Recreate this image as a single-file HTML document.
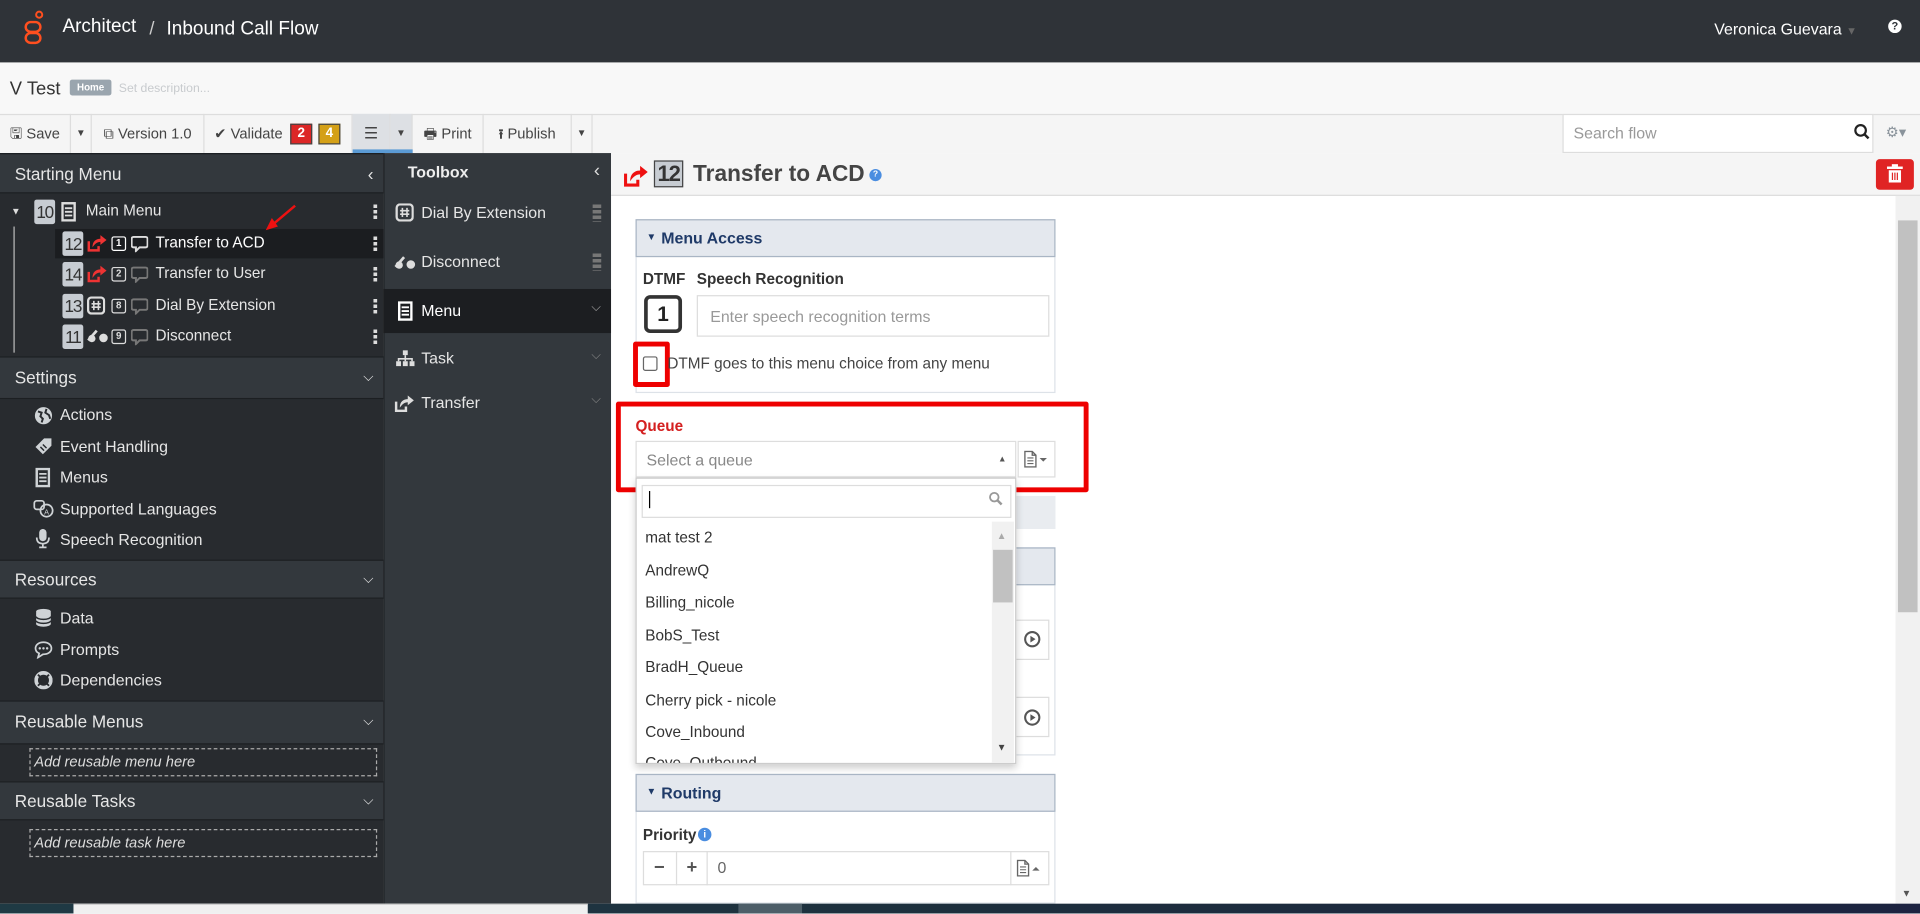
<!DOCTYPE html>
<html><head><meta charset="utf-8"><style>
html,body{margin:0;padding:0;width:1920px;height:914px;overflow:hidden;background:#fff}
#w{position:absolute;left:0;top:0;width:1568px;height:746px;transform:scale(1.22449);transform-origin:0 0;font-family:"Liberation Sans",sans-serif;font-size:13px;color:#333;overflow:hidden}
.a{position:absolute}
.hd{position:absolute;left:0;width:313px;background:#33383d;color:#e6e6e6;font-size:14px;border-top:1px solid #1c1f22;border-bottom:1px solid #1c1f22;box-sizing:border-box}
.hd span{position:absolute;left:12px}
.hd i{position:absolute;right:8px;font-style:normal;font-size:11px}
.it{position:absolute;left:49px;color:#e6e6e6;font-size:13px}
.tb{position:absolute;top:93px;height:32px;line-height:32px;font-size:12px;color:#444;border-right:1px solid #ddd;box-sizing:border-box;text-align:center}
.num{position:absolute;width:17px;height:20px;background:#c7ccd2;color:#333;font-size:14px;line-height:20px;text-align:center;border-radius:2px;letter-spacing:-1px}
.tx{position:absolute;left:127px;color:#e6e6e6;font-size:12.5px}
.dots{position:absolute;left:305px;width:3px;height:12px;background:repeating-linear-gradient(#ddd 0 3px,transparent 3px 4.5px)}
.tool{position:absolute;left:313px;width:186px;color:#e6e6e6;font-size:13px}
.q{position:absolute;left:527px;font-size:12.5px;color:#333}
.sq{position:absolute;left:91px;width:12px;height:12px;border:1.5px solid #ddd;box-sizing:border-box;border-radius:2px;color:#ddd;font-size:8px;text-align:center;line-height:9px;font-weight:bold}
</style></head><body><div id="w">
<svg width="0" height="0" style="position:absolute"><defs>
<symbol id="tr" viewBox="0 0 16 16"><path d="M1.5 7 V14.5 H9.5 V11" fill="none" stroke="currentColor" stroke-width="2"/><path d="M4.5 12 C4.5 7 7.5 5 11 5 V2 L16 6 L11 10 V7.5 C8.5 7.5 6.5 9 4.5 12Z" fill="currentColor"/></symbol>
<symbol id="bub" viewBox="0 0 14 14"><path d="M2 1.5 H12 a1.5 1.5 0 0 1 1.5 1.5 V8.5 a1.5 1.5 0 0 1 -1.5 1.5 H7 L4 13 V10 H2 a1.5 1.5 0 0 1 -1.5 -1.5 V3 a1.5 1.5 0 0 1 1.5 -1.5Z" fill="none" stroke="currentColor" stroke-width="1.6"/></symbol>
<symbol id="disc" viewBox="0 0 18 12"><path d="M1 10 L8 2" stroke="currentColor" stroke-width="2.2" fill="none"/><circle cx="4" cy="8.5" r="3" fill="currentColor"/><circle cx="13.5" cy="8" r="3.5" fill="currentColor"/></symbol>
<symbol id="doc" viewBox="0 0 12 16"><rect x="1" y="1" width="10" height="14" fill="none" stroke="currentColor" stroke-width="2"/><path d="M3 5H9M3 8H9M3 11H9" stroke="currentColor" stroke-width="1.5"/></symbol>
<symbol id="hash" viewBox="0 0 16 16"><rect x="1" y="1" width="14" height="14" rx="3" fill="none" stroke="currentColor" stroke-width="2"/><path d="M6 4V12M10 4V12M4 6.5H12M4 9.5H12" stroke="currentColor" stroke-width="1.4"/></symbol>
</defs></svg>
<!-- header -->
<div class="a" style="left:0;top:0;width:1568px;height:51px;background:#2f3338"></div>
<svg class="a" style="left:18px;top:8px" width="20" height="32" viewBox="0 0 20 32"><circle cx="14" cy="4" r="2.5" fill="none" stroke="#ff4f1f" stroke-width="1.6"/><rect x="3" y="10" width="12" height="8" rx="4" fill="none" stroke="#ff4f1f" stroke-width="2"/><rect x="3" y="19" width="12" height="8" rx="4" fill="none" stroke="#ff4f1f" stroke-width="2"/></svg>
<div class="a" style="left:51px;top:13px;font-size:15.5px;color:#fff">Architect</div>
<div class="a" style="left:122px;top:15px;font-size:15px;color:#ccc">/</div>
<div class="a" style="left:136px;top:15px;font-size:15.5px;color:#fff">Inbound Call Flow</div>
<div class="a" style="left:1400px;top:16px;font-size:13px;color:#fff">Veronica Guevara <span style="color:#666;font-size:9px">▼</span></div>
<div class="a" style="left:1542px;top:16px;width:11px;height:11px;border-radius:50%;background:#fff;color:#2f3338;font-size:9px;font-weight:bold;text-align:center;line-height:11px">?</div>
<!-- sub header -->
<div class="a" style="left:0;top:51px;width:1568px;height:42px;background:#f8f8f8"></div>
<div class="a" style="left:8px;top:64px;font-size:15px;color:#333">V Test</div>
<div class="a" style="left:57px;top:65px;width:34px;height:13px;background:#9aa5ae;color:#fff;font-size:8px;font-weight:bold;text-align:center;line-height:13px;border-radius:2px">Home</div>
<div class="a" style="left:97px;top:67px;font-size:10px;color:#c8cbce">Set description...</div>
<!-- toolbar -->
<div class="a" style="left:0;top:93px;width:1568px;height:32px;background:#f5f5f5;border-top:1px solid #ddd;box-sizing:border-box"></div>
<div class="tb" style="left:0;width:58px">🖫 Save</div>
<div class="tb" style="left:58px;width:17px;font-size:8px">▼</div>
<div class="tb" style="left:75px;width:92px">⧉ Version 1.0</div>
<div class="tb" style="left:167px;width:121px;text-align:left;padding-left:8px">✔ Validate
<span class="a" style="left:70px;top:8px;width:18px;height:17px;background:#dc2626;color:#fff;line-height:15px;font-weight:bold;border:1px solid #444;box-sizing:border-box;font-size:11px;text-align:center">2</span>
<span class="a" style="left:93px;top:8px;width:18px;height:17px;background:#d4a017;color:#fff;line-height:15px;font-weight:bold;border:1px solid #444;box-sizing:border-box;font-size:11px;text-align:center">4</span></div>
<div class="tb" style="left:288px;width:31px;background:#dde0e4;font-size:13px">☰</div>
<div class="tb" style="left:319px;width:18px;background:#dde0e4;font-size:8px">▼</div>
<div class="a" style="left:288px;top:122px;width:49px;height:3px;background:#5b9bd5"></div>
<div class="tb" style="left:337px;width:58px">🖶 Print</div>
<div class="tb" style="left:395px;width:72px"><b style="font-size:11px">⭱</b> Publish</div>
<div class="tb" style="left:467px;width:17px;font-size:8px">▼</div>
<div class="a" style="left:1276px;top:93px;width:254px;height:32px;background:#fff;border:1px solid #ddd;box-sizing:border-box"></div>
<div class="a" style="left:1285px;top:101px;font-size:13px;color:#999">Search flow</div>
<svg class="a" style="left:1514px;top:101px" width="13" height="13"><circle cx="5.5" cy="5.5" r="4.3" fill="none" stroke="#222" stroke-width="1.8"/><line x1="8.5" y1="8.5" x2="12" y2="12" stroke="#222" stroke-width="2"/></svg>
<div class="a" style="left:1540px;top:101px;font-size:12px;color:#8a939b">⚙▾</div>
<!-- left panel -->
<div class="a" style="left:0;top:125px;width:313px;height:613px;background:#282b2f"></div>
<div class="hd" style="top:125px;height:33px;line-height:32px"><span>Starting Menu</span><i style="font-size:14px">‹</i></div>
<div class="a" style="left:9px;top:168px;font-size:8px;color:#ddd">▼</div>
<div class="num" style="left:28px;top:163px">10</div>
<svg class="a" style="left:50px;top:165px;color:#ddd" width="12" height="16"><use href="#doc"/></svg>
<div class="a" style="left:70px;top:165px;color:#e6e6e6;font-size:12.5px">Main Menu</div>
<div class="dots" style="top:167px"></div>
<div class="a" style="left:11px;top:185px;width:1px;height:103px;background:#bbb"></div>
<div class="a" style="left:45px;top:187px;width:268px;height:24px;background:#1b1d20"></div>
<svg class="a" style="left:212px;top:166px" width="32" height="24"><line x1="29" y1="2" x2="10" y2="18" stroke="#e11" stroke-width="2"/><polygon points="5,22 10,12 15,19" fill="#e11"/></svg>
<div class="num" style="left:51px;top:189px">12</div>
<div class="num" style="left:51px;top:214px">14</div>
<div class="num" style="left:51px;top:240px">13</div>
<div class="num" style="left:51px;top:265px">11</div>
<svg class="a" style="left:71px;top:190px;color:#e33" width="16" height="16"><use href="#tr"/></svg>
<svg class="a" style="left:71px;top:215px;color:#e33" width="16" height="16"><use href="#tr"/></svg>
<svg class="a" style="left:71px;top:242px;color:#ddd" width="15" height="15"><use href="#hash"/></svg>
<svg class="a" style="left:71px;top:268px;color:#ddd" width="18" height="12"><use href="#disc"/></svg>
<div class="sq" style="top:193px;border-color:#fff;color:#fff">1</div>
<div class="sq" style="top:218px">2</div>
<div class="sq" style="top:244px">8</div>
<div class="sq" style="top:269px">9</div>
<svg class="a" style="left:107px;top:192px;color:#ddd" width="14" height="14"><use href="#bub"/></svg>
<svg class="a" style="left:107px;top:217px;color:#777" width="14" height="14"><use href="#bub"/></svg>
<svg class="a" style="left:107px;top:243px;color:#777" width="14" height="14"><use href="#bub"/></svg>
<svg class="a" style="left:107px;top:268px;color:#777" width="14" height="14"><use href="#bub"/></svg>
<div class="tx" style="top:191px;color:#fff">Transfer to ACD</div>
<div class="tx" style="top:216px">Transfer to User</div>
<div class="tx" style="top:242px">Dial By Extension</div>
<div class="tx" style="top:267px">Disconnect</div>
<div class="dots" style="top:193px"></div><div class="dots" style="top:218px"></div><div class="dots" style="top:244px"></div><div class="dots" style="top:269px"></div>
<div class="hd" style="top:291px;height:35px;line-height:33px"><span>Settings</span><i>⌵</i></div>
<svg class="a" style="left:28px;top:332px" width="15" height="15" viewBox="0 0 15 15"><circle cx="7.5" cy="7.5" r="7" fill="#cfd3d6"/><path d="M3 4 L6 5 L5 8 L7 10 L6 13 M10 2 L9 5 L12 7 L13 10" stroke="#282b2f" stroke-width="1.6" fill="none"/></svg>
<div class="it" style="top:331px">Actions</div>
<svg class="a" style="left:28px;top:357px" width="15" height="15" viewBox="0 0 15 15"><path d="M1 8 L8 1 L14 1 L14 7 L7 14Z" fill="#cfd3d6"/><path d="M5 8 L8 11 M7 6 L10 9" stroke="#282b2f" stroke-width="1.2"/></svg>
<div class="it" style="top:357px">Event Handling</div>
<svg class="a" style="left:29px;top:382px;color:#cfd3d6" width="12" height="16"><use href="#doc"/></svg>
<div class="it" style="top:382px">Menus</div>
<svg class="a" style="left:27px;top:408px" width="17" height="15" viewBox="0 0 17 15"><rect x="1" y="1" width="8" height="7" rx="2" fill="none" stroke="#cfd3d6" stroke-width="1.4"/><circle cx="11" cy="9" r="5" fill="none" stroke="#cfd3d6" stroke-width="1.4"/><text x="9" y="12" font-size="6" fill="#cfd3d6" font-family="Liberation Sans">A</text></svg>
<div class="it" style="top:408px">Supported Languages</div>
<svg class="a" style="left:29px;top:432px" width="12" height="16" viewBox="0 0 12 16"><rect x="3" y="0" width="6" height="10" rx="3" fill="#cfd3d6"/><path d="M1 7 Q1 12 6 12 Q11 12 11 7 M6 12V15 M3 15H9" stroke="#cfd3d6" stroke-width="1.4" fill="none"/></svg>
<div class="it" style="top:433px">Speech Recognition</div>
<div class="hd" style="top:457px;height:32px;line-height:30px"><span>Resources</span><i>⌵</i></div>
<svg class="a" style="left:29px;top:497px" width="13" height="15" viewBox="0 0 13 15"><ellipse cx="6.5" cy="2.5" rx="6" ry="2.3" fill="#cfd3d6"/><path d="M0.5 3V12.5 A6 2.3 0 0 0 12.5 12.5V3" fill="#cfd3d6"/><path d="M0.5 6.5 A6 2.3 0 0 0 12.5 6.5 M0.5 9.8 A6 2.3 0 0 0 12.5 9.8" stroke="#282b2f" stroke-width="1.2" fill="none"/></svg>
<div class="it" style="top:497px">Data</div>
<svg class="a" style="left:28px;top:523px" width="15" height="15" viewBox="0 0 15 15"><path d="M7.5 1.5 C3.5 1.5 1 3.8 1 6.5 C1 8.3 2.2 9.8 4 10.6 L3 14 L7 11.4 C11.5 11.4 14 9.2 14 6.5 C14 3.8 11.5 1.5 7.5 1.5Z" fill="none" stroke="#cfd3d6" stroke-width="1.4"/><circle cx="4.5" cy="6.5" r="1" fill="#cfd3d6"/><circle cx="7.5" cy="6.5" r="1" fill="#cfd3d6"/><circle cx="10.5" cy="6.5" r="1" fill="#cfd3d6"/></svg>
<div class="it" style="top:523px">Prompts</div>
<svg class="a" style="left:28px;top:548px" width="15" height="15" viewBox="0 0 15 15"><circle cx="7.5" cy="7.5" r="6" fill="none" stroke="#cfd3d6" stroke-width="3"/><circle cx="7.5" cy="7.5" r="2.6" fill="#282b2f"/><path d="M3 3L5.5 5.5M12 3L9.5 5.5M3 12L5.5 9.5M12 12L9.5 9.5" stroke="#282b2f" stroke-width="1.5"/></svg>
<div class="it" style="top:548px">Dependencies</div>
<div class="hd" style="top:572px;height:36px;line-height:33px"><span>Reusable Menus</span><i>⌵</i></div>
<div class="a" style="left:24px;top:611px;width:284px;height:23px;border:1px dashed #aaa;box-sizing:border-box;color:#ddd;font-style:italic;font-size:12px;line-height:21px;padding-left:3px">Add reusable menu here</div>
<div class="hd" style="top:638px;height:32px;line-height:30px"><span>Reusable Tasks</span><i>⌵</i></div>
<div class="a" style="left:24px;top:677px;width:284px;height:23px;border:1px dashed #aaa;box-sizing:border-box;color:#ddd;font-style:italic;font-size:12px;line-height:21px;padding-left:3px">Add reusable task here</div>
<!-- toolbox -->
<div class="a" style="left:313px;top:125px;width:186px;height:613px;background:#33383d;border-left:1px solid #1c1f22;box-sizing:border-box"></div>
<div class="a" style="left:333px;top:133px;color:#eee;font-weight:bold;font-size:13px">Toolbox</div>
<div class="a" style="left:485px;top:131px;color:#ddd;font-size:15px">‹</div>
<div class="tool" style="top:166px"><svg class="a" style="left:10px;color:#ddd" width="15" height="15"><use href="#hash"/></svg><span class="a" style="left:31px">Dial By Extension</span><span class="a" style="left:171px;top:1px;width:7px;height:14px;background:repeating-linear-gradient(#777 0 3px,transparent 3px 4.5px)"></span></div>
<div class="tool" style="top:206px"><svg class="a" style="left:9px;top:2px;color:#ddd" width="18" height="12"><use href="#disc"/></svg><span class="a" style="left:31px">Disconnect</span><span class="a" style="left:171px;top:1px;width:7px;height:14px;background:repeating-linear-gradient(#777 0 3px,transparent 3px 4.5px)"></span></div>
<div class="a" style="left:313px;top:236px;width:186px;height:36px;background:#1c1e21"></div>
<div class="tool" style="top:246px;color:#fff"><svg class="a" style="left:12px;color:#fff" width="12" height="16"><use href="#doc"/></svg><span class="a" style="left:31px">Menu</span><span class="a" style="left:170px;font-size:10px;color:#aaa">⌵</span></div>
<div class="tool" style="top:285px"><svg class="a" style="left:10px;top:1px" width="16" height="14" viewBox="0 0 16 14"><rect x="6" y="0" width="4" height="4" fill="#ddd"/><path d="M8 4V7 M2.5 9V7H13.5V9 M8 7V9" stroke="#ddd" stroke-width="1.3" fill="none"/><rect x="0.5" y="9" width="4" height="4" fill="#ddd"/><rect x="6" y="9" width="4" height="4" fill="#ddd"/><rect x="11.5" y="9" width="4" height="4" fill="#ddd"/></svg><span class="a" style="left:31px">Task</span><span class="a" style="left:170px;font-size:10px;color:#888">⌵</span></div>
<div class="tool" style="top:321px"><svg class="a" style="left:9px;color:#ddd" width="16" height="16"><use href="#tr"/></svg><span class="a" style="left:31px">Transfer</span><span class="a" style="left:170px;font-size:10px;color:#888">⌵</span></div>
<!-- main -->
<div class="a" style="left:499px;top:125px;width:1069px;height:35px;background:#f5f5f5;border-bottom:1px solid #ddd;box-sizing:border-box"></div>
<svg class="a" style="left:509px;top:133px;color:#e11" width="20" height="20"><use href="#tr"/></svg>
<div class="a" style="left:534px;top:131px;width:24px;height:22px;background:#c7ccd2;border:1px solid #444;box-sizing:border-box;font-size:18px;line-height:20px;text-align:center;color:#333;font-weight:bold;letter-spacing:-1px">12</div>
<div class="a" style="left:566px;top:131px;font-size:18.5px;font-weight:bold;color:#444">Transfer to ACD</div>
<div class="a" style="left:710px;top:138px;width:10px;height:10px;border-radius:50%;background:#4a8de0;color:#fff;font-size:7px;text-align:center;line-height:10px;font-weight:bold">?</div>
<div class="a" style="left:1532px;top:130px;width:31px;height:25px;background:#e02424;border-radius:3px"></div>
<svg class="a" style="left:1541px;top:134px" width="13" height="16" viewBox="0 0 13 16"><rect x="4" y="0" width="5" height="2" fill="#fff"/><rect x="0" y="2" width="13" height="2" fill="#fff"/><path d="M1.5 5H11.5V15H1.5Z" fill="#fff"/><path d="M4.5 7V13M6.5 7V13M8.5 7V13" stroke="#e02424" stroke-width="1"/></svg>
<div class="a" style="left:1548px;top:160px;width:20px;height:578px;background:#f1f1f1"></div>
<div class="a" style="left:1550px;top:180px;width:16px;height:320px;background:#c1c1c1"></div>
<div class="a" style="left:1553px;top:725px;font-size:8px;color:#555">▼</div>
<!-- menu access -->
<div class="a" style="left:519px;top:179px;width:343px;height:142px;border:1px solid #dde2e8;box-sizing:border-box"></div>
<div class="a" style="left:519px;top:179px;width:343px;height:31px;background:#e4e8ee;border:1px solid #a9b5c4;box-sizing:border-box"></div>
<div class="a" style="left:528px;top:189px;font-size:8px;color:#1f3a68">▼</div>
<div class="a" style="left:540px;top:187px;font-size:13px;font-weight:bold;color:#1f3a68">Menu Access</div>
<div class="a" style="left:525px;top:221px;font-size:12.5px;font-weight:bold;color:#333">DTMF</div>
<div class="a" style="left:569px;top:221px;font-size:12.5px;font-weight:bold;color:#333">Speech Recognition</div>
<div class="a" style="left:526px;top:241px;width:31px;height:31px;border:3px solid #333;border-radius:5px;box-sizing:border-box;text-align:center;line-height:25px;font-size:17px;font-weight:bold;color:#222">1</div>
<div class="a" style="left:569px;top:241px;width:288px;height:34px;border:1px solid #ddd;box-sizing:border-box"></div>
<div class="a" style="left:580px;top:251px;font-size:13px;color:#999">Enter speech recognition terms</div>
<div class="a" style="left:517px;top:279px;width:30px;height:37px;border:4px solid #e00;box-sizing:border-box;border-radius:2px"></div>
<div class="a" style="left:525px;top:291px;width:12px;height:12px;border:1px solid #666;border-radius:2px;background:#fff;box-sizing:border-box"></div>
<div class="a" style="left:545px;top:290px;font-size:12.5px;color:#444">DTMF goes to this menu choice from any menu</div>
<!-- behind dropdown -->
<div class="a" style="left:519px;top:405px;width:343px;height:27px;background:#e9ecf0"></div>
<div class="a" style="left:519px;top:447px;width:343px;height:170px;border:1px solid #dde2e8;box-sizing:border-box"></div>
<div class="a" style="left:519px;top:447px;width:343px;height:31px;background:#e4e8ee;border:1px solid #a9b5c4;box-sizing:border-box"></div>
<div class="a" style="left:828px;top:506px;width:29px;height:33px;border:1px solid #ddd;box-sizing:border-box"></div>
<div class="a" style="left:828px;top:569px;width:29px;height:33px;border:1px solid #ddd;box-sizing:border-box"></div>
<svg class="a" style="left:836px;top:515px" width="14" height="14" viewBox="0 0 14 14"><circle cx="7" cy="7" r="5.8" fill="none" stroke="#555" stroke-width="1.7"/><path d="M5.5 4.3V9.7L9.7 7Z" fill="#555"/></svg>
<svg class="a" style="left:836px;top:579px" width="14" height="14" viewBox="0 0 14 14"><circle cx="7" cy="7" r="5.8" fill="none" stroke="#555" stroke-width="1.7"/><path d="M5.5 4.3V9.7L9.7 7Z" fill="#555"/></svg>
<!-- queue -->
<div class="a" style="left:503px;top:328px;width:386px;height:74px;border:4px solid #e00;box-sizing:border-box;border-radius:2px"></div>
<div class="a" style="left:519px;top:341px;font-size:12.5px;font-weight:bold;color:#d42020">Queue</div>
<div class="a" style="left:519px;top:360px;width:311px;height:30px;border:1px solid #ddd;box-sizing:border-box;background:#fff"></div>
<div class="a" style="left:528px;top:368px;font-size:13px;color:#888">Select a queue</div>
<div class="a" style="left:815px;top:372px;font-size:7px;color:#555">▲</div>
<div class="a" style="left:831px;top:360px;width:31px;height:30px;border:1px solid #ddd;box-sizing:border-box"></div>
<svg class="a" style="left:836px;top:368px" width="22" height="14" viewBox="0 0 22 14"><path d="M1 0.7H7L10 3.7V13.3H1Z M7 0.7V3.7H10" fill="none" stroke="#666" stroke-width="1.1"/><path d="M3 6H8M3 8.3H8M3 10.6H8" stroke="#666" stroke-width="0.9"/><path d="M13 6H19L16 9Z" fill="#666"/></svg>
<!-- dropdown -->
<div class="a" style="left:519px;top:390px;width:311px;height:234px;background:#fff;border:1px solid #ccc;box-sizing:border-box;box-shadow:0 3px 6px rgba(0,0,0,.2)"></div>
<div class="a" style="left:524px;top:396px;width:302px;height:27px;border:1px solid #ddd;box-sizing:border-box"></div>
<div class="a" style="left:530px;top:401px;width:1px;height:14px;background:#000"></div>
<svg class="a" style="left:807px;top:401px" width="12" height="12"><circle cx="5" cy="5" r="3.5" fill="none" stroke="#999" stroke-width="1.5"/><line x1="7.5" y1="7.5" x2="11" y2="11" stroke="#999" stroke-width="2"/></svg>
<div class="a" style="left:810px;top:426px;width:18px;height:197px;background:#f1f1f1"></div>
<div class="a" style="left:811px;top:449px;width:16px;height:43px;background:#c1c1c1"></div>
<div class="a" style="left:814px;top:433px;font-size:8px;color:#aaa">▲</div>
<div class="a" style="left:814px;top:606px;font-size:8px;color:#444">▼</div>
<div class="a" style="left:520px;top:426px;width:290px;height:197px;overflow:hidden">
<div class="q" style="left:7px;top:6px">mat test 2</div>
<div class="q" style="left:7px;top:33px">AndrewQ</div>
<div class="q" style="left:7px;top:59px">Billing_nicole</div>
<div class="q" style="left:7px;top:86px">BobS_Test</div>
<div class="q" style="left:7px;top:112px">BradH_Queue</div>
<div class="q" style="left:7px;top:139px">Cherry pick - nicole</div>
<div class="q" style="left:7px;top:165px">Cove_Inbound</div>
<div class="q" style="left:7px;top:190px">Cove_Outbound</div>
</div>
<!-- routing -->
<div class="a" style="left:519px;top:632px;width:343px;height:106px;border:1px solid #dde2e8;box-sizing:border-box"></div>
<div class="a" style="left:519px;top:632px;width:343px;height:31px;background:#e4e8ee;border:1px solid #a9b5c4;box-sizing:border-box"></div>
<div class="a" style="left:528px;top:642px;font-size:8px;color:#1f3a68">▼</div>
<div class="a" style="left:540px;top:640px;font-size:13px;font-weight:bold;color:#1f3a68">Routing</div>
<div class="a" style="left:525px;top:675px;font-size:12.5px;font-weight:bold;color:#333">Priority</div>
<div class="a" style="left:570px;top:676px;width:11px;height:11px;border-radius:50%;background:#4a8de0;color:#fff;font-size:8px;text-align:center;line-height:11px;font-weight:bold">i</div>
<div class="a" style="left:525px;top:695px;width:332px;height:28px;border:1px solid #ddd;box-sizing:border-box"></div>
<div class="a" style="left:525px;top:695px;width:27px;height:28px;border-right:1px solid #ddd;text-align:center;line-height:27px;font-weight:bold;color:#555;font-size:15px">−</div>
<div class="a" style="left:553px;top:695px;width:24px;height:28px;border-right:1px solid #ddd;text-align:center;line-height:27px;font-weight:bold;color:#555;font-size:15px">+</div>
<div class="a" style="left:586px;top:701px;font-size:13px;color:#666">0</div>
<div class="a" style="left:825px;top:695px;width:32px;height:28px;border-left:1px solid #ddd;box-sizing:border-box"></div>
<svg class="a" style="left:830px;top:702px" width="22" height="14" viewBox="0 0 22 14"><path d="M1 0.7H7L10 3.7V13.3H1Z M7 0.7V3.7H10" fill="none" stroke="#666" stroke-width="1.1"/><path d="M3 6H8M3 8.3H8M3 10.6H8" stroke="#666" stroke-width="0.9"/><path d="M13 9H19L16 6Z" fill="#666"/></svg>
<!-- taskbar -->
<div class="a" style="left:0;top:738px;width:1568px;height:8px;background:linear-gradient(90deg,#1f3a44,#1d2f3d 50%,#1c2340)"></div>
<div class="a" style="left:60px;top:738px;width:420px;height:8px;background:#f0f0f0;border-top:1px solid #ccc;box-sizing:border-box"></div>
<div class="a" style="left:603px;top:738px;width:52px;height:8px;background:#4d5e68"></div>
</div></body></html>
